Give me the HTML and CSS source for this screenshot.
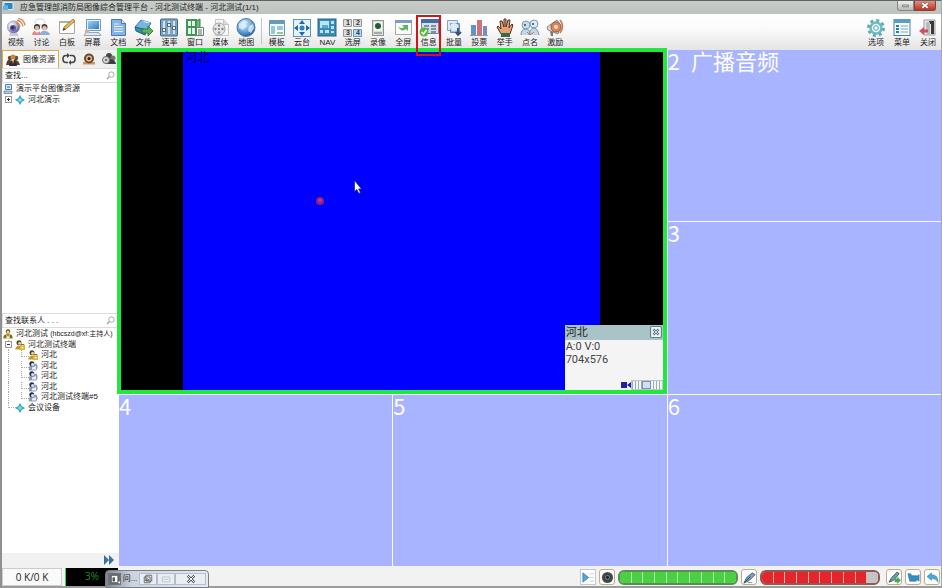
FILE: index.html
```html
<!DOCTYPE html>
<html lang="zh-CN">
<head>
<meta charset="utf-8">
<title>应急管理部消防局图像综合管理平台</title>
<link rel="stylesheet" href="styles.css">
</head>
<body>
<svg class="defs" aria-hidden="true">
  <defs>
    <linearGradient id="blue" x1="0" y1="0" x2="1" y2="1"><stop offset="0" stop-color="#9fd2f4"/><stop offset="1" stop-color="#3479bd"/></linearGradient>
    <radialGradient id="globe" cx=".4" cy=".3" r=".7"><stop offset="0" stop-color="#d8efff"/><stop offset=".6" stop-color="#69a7dc"/><stop offset="1" stop-color="#2c6297"/></radialGradient>
    <radialGradient id="ball" cx=".35" cy=".35" r=".7"><stop offset="0" stop-color="#fff"/><stop offset=".6" stop-color="#aab4d2"/><stop offset="1" stop-color="#4d5686"/></radialGradient>
    <symbol id="star" viewBox="0 0 10 10"><path d="M5 0 6.8 3.2 10 5 6.8 6.8 5 10 3.2 6.8 0 5 3.2 3.2Z" fill="#2ba3bf"/><path d="M5 2.5 6 4 7.5 5 6 6 5 7.5 4 6 2.5 5 4 4Z" fill="#7fdcea"/></symbol>
    <symbol id="host" viewBox="0 0 10 10"><circle cx="5" cy="2.5" r="2.2" fill="#6b4b16"/><circle cx="5" cy="3.1" r="1.5" fill="#f3d093"/><path d="M0 9.5 1 6 4 5h2l3 1 1 3.500Z" fill="#a58824"/><path d="M3.500 5.500 5 8l1.500-2.500V9.500h-3Z" fill="#f8f1c4"/><path d="M1 6.500h2v2H1zM7 6.500h2v2H7z" fill="#4e7431"/></symbol>
    <symbol id="user" viewBox="0 0 10 10"><path d="M1 9.500Q0 5 4 4L8.500 2.500Q11 7 8 9.500Z" fill="#8d9bbb"/><circle cx="3.800" cy="2.800" r="2.500" fill="#29303f"/><circle cx="4.600" cy="3.500" r="1.600" fill="#dbe1ed"/><path d="M4 6.500 8 5v3.500H4Z" fill="#e8eefa"/></symbol>
    <symbol id="userLock" viewBox="0 0 10 10"><circle cx="4" cy="2.800" r="2.500" fill="#54451f"/><circle cx="4.600" cy="3.300" r="1.500" fill="#e8cf98"/><path d="M0 9.500Q1 6 4 5.500l2 1v3Z" fill="#b99b3a"/><path d="M5 5.500h5V10H5Z" fill="#e8ae3b"/><path d="M6 5.500V4.500h3v1" stroke="#987023" fill="none"/><path d="M6.500 7h2v1.500h-2Z" fill="#fff3bf"/></symbol>
    <symbol id="lens" viewBox="0 0 10 10"><circle cx="6" cy="4" r="3" fill="none" stroke="#a3a3a3"/><path d="M4 6 1 9" stroke="#a3a3a3" stroke-width="1.500"/></symbol>
    <symbol id="pc" viewBox="0 0 10 10"><path d="M2.500.5h6v5h-6Z" fill="#dceaf4" stroke="#557c9a"/><path d="M4 2h3v2H4Z" fill="#6fb1d8"/><path d="M1 7h8v2.500H1Z" fill="#b4cbd9" stroke="#557c9a" stroke-width=".7"/></symbol>
  </defs>
</svg>
<div class="app">
  <header class="titlebar">
    <svg class="appicon" viewBox="0 0 12 10"><path d="M2 .5h9v7H2Z" fill="#2d86c8" stroke="#d8eefa"/><path d="M1 4 6 3v5H1Z" fill="#64b5e4"/></svg>
    <h1 class="title">应急管理部消防局图像综合管理平台 - 河北测试终端 - 河北测试(1/1)</h1>
    <button class="win min" aria-label="最小化"><svg viewBox="0 0 18 10"><path d="M5.500 4.500h7v2h-7Z" fill="#fff" stroke="#666"/></svg></button>
    <button class="win quit" aria-label="关闭窗口"><svg viewBox="0 0 22 10"><path d="m8 2.500 6 5m0-5-6 5" stroke="#70302a" stroke-width="3"/><path d="m8 2.500 6 5m0-5-6 5" stroke="#fff" stroke-width="2"/></svg></button>
  </header>

  <nav class="toolbar">
    <div class="tools tools-main">
      <button class="tool"><svg viewBox="0 0 20 20"><circle cx="7.500" cy="9" r="6.200" fill="url(#ball)" stroke="#9b94bd" stroke-width=".6"/><circle cx="7" cy="10" r="3" fill="#6654a5"/><circle cx="6.500" cy="9.500" r="1.300" fill="#271e58"/><path d="m4 15-1 3h10l-2-3Z" fill="#c9c9dc"/><path d="M10 5q3 0 4 4M11 2.500q5 .5 6 6M12 .5q6 .5 7 7" fill="none" stroke="#dc8956" stroke-width="1.300"/></svg>视频</button>
      <button class="tool"><svg viewBox="0 0 20 20"><ellipse cx="9" cy="4" rx="5" ry="3" fill="#fff" stroke="#bbc6d5" stroke-width=".7"/><circle cx="6" cy="9" r="3" fill="#40383b"/><circle cx="6" cy="10" r="2.200" fill="#e9b492"/><circle cx="13.500" cy="9" r="3" fill="#514448"/><circle cx="13.500" cy="10.200" r="2.200" fill="#eabfa4"/><path d="M1 17q1-5 5-4 4 0 4 4Z" fill="#db8a90"/><path d="M9 17q1-5 5-4 4 0 5 4Z" fill="#8bb0d8"/><path d="m4 13 2 2 2-2" fill="#fff"/></svg>讨论</button>
      <button class="tool"><svg viewBox="0 0 20 20"><path d="M2.500 3.500h15v12h-15Z" fill="#fff" stroke="#a8a8a0"/><path d="M2 3h16v2H2Z" fill="#9fbd85"/><path d="m6 12 1-3 9-8 2 2-9 8Z" fill="#e8b75a" stroke="#885d31" stroke-width=".7"/><path d="m5.500 13 1.500-3 1.500 1.500Z" fill="#333"/></svg>白板</button>
      <button class="tool"><svg viewBox="0 0 20 20"><path d="M3.500 1.500h14v11h-14Z" fill="#e4eff8" stroke="#6b9cc4"/><path d="M5 3h11v8H5Z" fill="url(#blue)"/><path d="M3 14.500h13l2 3H1Z" fill="#dde7ed" stroke="#8095a4" stroke-width=".8"/><path d="M2 12h4v3H2Z" fill="#d3ae8e"/></svg>屏幕</button>
      <button class="tool"><svg viewBox="0 0 20 20"><path d="M3.500 1.500h10l4 4v12h-14Z" fill="#86b4e7" stroke="#4979b7"/><path d="M13.500 1.500v4h4" fill="#dceafb" stroke="#4979b7"/><path d="M6 6h5M6 8.500h9M6 11h9M6 13.500h9" stroke="#e5f0ff"/></svg>文档</button>
      <button class="tool"><svg viewBox="0 0 20 20"><path d="m1 9 6-7 10 3-5 9Z" fill="#74b6df" stroke="#397da9"/><path d="m7 2 5 3 5 0" fill="#d4f1ff"/><path d="m1 9 12 3-2 5-9-4Z" fill="#328eae" stroke="#23627f"/><path d="M8 11h6V8l5 5-5 5v-3H8Z" fill="#5cb55c" stroke="#286b32" stroke-width=".8"/></svg>文件</button>
      <button class="tool"><svg viewBox="0 0 20 20"><rect x="1.500" y="1" width="17" height="17" rx="1" fill="#7fa5c2" stroke="#3f6685"/><path d="M5 3v13M10 3v13M15 3v13" stroke="#eef6fa" stroke-width="1.500"/><path d="M3.500 10.500h3v3h-3ZM8.500 5.500h3v3h-3ZM13.500 8.500h3v3h-3Z" fill="#fff" stroke="#284962" stroke-width=".8"/></svg>速率</button>
      <button class="tool"><svg viewBox="0 0 20 20"><path d="M1 1h11v17H1Z" fill="#409658"/><path d="M3 3h3v5H3ZM7 3h3v5H7ZM3 10h3v6H3ZM7 10h3v6H7Z" fill="#e3f5e5"/><path d="m11 3 4-2v11l-4 3Z" fill="#6abb76" stroke="#32804a"/><path d="M11.500 9.500h7v8h-7Z" fill="#fff" stroke="#66806d"/><path d="M13 12h4M13 14h4M13 16h4" stroke="#53715b"/></svg>窗口</button>
      <button class="tool"><svg viewBox="0 0 20 20"><path d="M4.500 1.500h8l5 5v11h-13Z" fill="#f7f7f7" stroke="#c4c4c4"/><path d="M12.500 1.500v5h5" fill="#ddd" stroke="#c4c4c4"/><circle cx="8" cy="11" r="6" fill="#e6e7e8" stroke="#a2a2a2"/><circle cx="8" cy="11" r="1" fill="#777"/><g fill="#8a8a8a"><circle cx="8" cy="7.500" r="1.200"/><circle cx="8" cy="14.500" r="1.200"/><circle cx="4.500" cy="11" r="1.200"/><circle cx="11.500" cy="11" r="1.200"/></g></svg>媒体</button>
      <button class="tool"><svg viewBox="0 0 20 20"><circle cx="10" cy="9.500" r="9" fill="url(#globe)" stroke="#447cac"/><path d="m3 6 5-4 4 2-3 2 2 2-4 4-4-2ZM13 8l4-2 1 4-3 5-3-2Z" fill="#e6f3fb" opacity=".75"/></svg>地图</button>
    </div>
    <div class="divider"></div>
    <div class="tools tools-view">
      <button class="tool"><svg viewBox="0 0 20 20"><path d="M2.500 2.500h15v15h-15Z" fill="#f2fafc" stroke="#6b98a6"/><path d="M3 3h14v3H3Z" fill="#619dbe"/><path d="M4 8h4v8H4ZM10 8h6v4h-6Z" fill="#98c9d2"/><path d="M10 14h6v2h-6Z" fill="#9cc88f"/></svg>模板</button>
      <button class="tool"><svg viewBox="0 0 20 20"><rect x="1.500" y="1.500" width="17" height="17" fill="#e3f2fc" stroke="#6794b5"/><path d="m10 2 3 4H7ZM10 18l3-4H7ZM2 10l4-3v6ZM18 10l-4-3v6Z" fill="#2268a7"/><circle cx="10" cy="10" r="2.500" fill="#2e83c5"/></svg>云台</button>
      <button class="tool"><svg viewBox="0 0 20 20"><rect x="1" y="1" width="18" height="17" fill="#398bb9" stroke="#276485"/><path d="M3 3h9v7H3ZM14 3h3v3h-3ZM14 8h3v3h-3ZM3 12h3v3H3ZM8 12h4v3H8ZM14 13h3v2h-3Z" fill="#b9e4f4"/><path d="M5 7h6v3H5Z" fill="#58a9d0"/></svg><span lang="en">NAV</span></button>
      <button class="tool"><svg viewBox="0 0 20 20"><g fill="#ddd" stroke="#999"><path d="M.5 1.500h8v7h-8ZM10.500 1.500h8v7h-8ZM.5 11.500h8v7h-8Z"/><path d="M10.500 11.500h8v7h-8Z" fill="#b7daf5" stroke="#6594bd"/></g><g class="digits"><text x="3" y="7">1</text><text x="13" y="7">2</text><text x="3" y="17">3</text><text x="13" y="17">4</text></g></svg>选屏</button>
      <button class="tool"><svg viewBox="0 0 20 20"><rect x="4.500" y="2.500" width="11" height="15" fill="#d8dfd9" stroke="#929992"/><path d="M6 4h8v9H6Z" fill="#eff5ef"/><circle cx="10" cy="8" r="3" fill="#255c39"/><path d="M6 15h8" stroke="#777"/></svg>录像</button>
      <button class="tool"><svg viewBox="0 0 20 20"><path d="M2.500 2.500h16v14h-16Z" fill="#fafafa" stroke="#aaa"/><path d="M2 2h17v3H2Z" fill="#7c9ebe"/><path d="M5 8q3 4 6 1l-2-2h6v6l-2-2q-5 4-8-3Z" fill="#62b25a"/></svg>全屏</button>
      <button class="tool marked"><svg viewBox="0 0 20 20"><path d="M2.500 1.500h17v14h-17Z" fill="#d7e0e8" stroke="#77899b"/><path d="M2 1h18v4H2Z" fill="#426caa"/><path d="M5 8h5M12 8h5M5 11h5M12 11h5M12 14h5" stroke="#60788e" stroke-width="1.500"/><circle cx="5" cy="14" r="4.500" fill="#58b943"/><path d="m2.500 14 2 2 3-4" fill="none" stroke="#fff" stroke-width="1.500"/></svg>信息</button>
      <button class="tool"><svg viewBox="0 0 20 20"><path d="M3.500 2.500h10v10h-10Z" fill="#dcecf6" stroke="#86a4bc"/><path d="M6.500 5.500h9v9h-9Z" fill="#9cc0dd" stroke="#678eae"/><circle cx="10" cy="9" r="4" fill="#edf7ff" opacity=".8"/><path d="M14 10v6m-2.500-2 2.500 3 3-3" fill="none" stroke="#374e74" stroke-width="1.800"/></svg>批量</button>
      <button class="tool"><svg viewBox="0 0 20 20"><path d="M2 7h5v10H2Z" fill="#5c94cc"/><path d="M8 2h5v15H8Z" fill="#d0707f"/><path d="M14 8h4v9h-4Z" fill="#6f8ccb"/><path d="M1 17.500h18" stroke="#999"/></svg>投票</button>
      <button class="tool"><svg viewBox="0 0 20 20"><path d="M6 16 2 9l1-1 3 3-1-8h2l2 6V1h2v8l2-7h2l-1 8 3-4 1 1-3 9Z" fill="#e3a376" stroke="#563020" stroke-width="1"/><path d="M6 15h9v4H6Z" fill="#366c4c"/></svg>举手</button>
      <button class="tool"><svg viewBox="0 0 20 20"><circle cx="6" cy="7" r="4" fill="#caddec" stroke="#7c9cb5"/><circle cx="14" cy="6" r="4" fill="#dbe9f5" stroke="#7c9cb5"/><path d="M1 17q0-6 5-6 4 0 4 6M9 17q1-7 5-7 4 1 5 7" fill="#c5d7e7" stroke="#7992a5"/><circle cx="5" cy="7" r="1" fill="#345"/><circle cx="13" cy="6" r="1" fill="#345"/><path d="m7 14 3 3 4-3" stroke="#b77" fill="none"/></svg>点名</button>
      <button class="tool"><svg viewBox="0 0 20 20"><path d="m2 9 10-7q5 5 1 14L3 12Z" fill="#dadada" stroke="#888"/><circle cx="11" cy="9" r="5" fill="#d68a5b" stroke="#99593a"/><circle cx="11" cy="9" r="2" fill="#f3dacb"/><path d="M15 2q5 6 0 13" fill="none" stroke="#bd7650" stroke-width="1.500"/><path d="m5 13 3 1v4H6Z" fill="#777"/></svg>激励</button>
    </div>
    <div class="tools tools-app">
      <button class="tool"><svg viewBox="0 0 20 20"><circle cx="10" cy="10" r="7.500" fill="none" stroke="#5faab4" stroke-width="3" stroke-dasharray="2.950 2.940"/><circle cx="10" cy="10" r="5.500" fill="#e5f5f7" stroke="#6cb9c1" stroke-width="2.500"/><circle cx="10" cy="10" r="2.300" fill="#fff" stroke="#57a3ac"/></svg>选项</button>
      <button class="tool"><svg viewBox="0 0 20 20"><rect x="2" y="1.500" width="16" height="16" fill="#f5fbff" stroke="#4680a9"/><path d="M2 1h16v4H2Z" fill="#5c9dca"/><path d="M4 8h3M4 11h3M4 14h3" stroke="#297bb4" stroke-width="2"/><path d="M8.500 8H16M8.500 11H16M8.500 14H16" stroke="#7fa4be"/></svg>菜单</button>
      <button class="tool"><svg viewBox="0 0 20 20"><path d="M6 2h11v15H6Z" fill="#e9e9e9" stroke="#999"/><path d="M11 3h5v13h-3V6h-2Z" fill="#39363e"/><path d="M8 4h4v13l-4-2Z" fill="#b8b8bd"/><path d="m1 13 5-4v2.500h4v3H6V17Z" fill="#cc5262"/></svg>关闭</button>
    </div>
  </nav>

  <main class="workspace">
    <aside class="sidebar">
      <div class="tabs">
        <button class="tab current"><svg viewBox="0 0 14 12"><circle cx="4" cy="4" r="2.200" fill="#694728"/><circle cx="10" cy="4" r="2.200" fill="#694728"/><path d="M0 11q1-6 4-5t3 5ZM7 11q0-6 3-5t4 5Z" fill="#574039"/><circle cx="7" cy="3" r="2.500" fill="#c08951"/><path d="M3 12q1-6 4-6t4 6Z" fill="#322d35"/><path d="m6 6 1 4 1-4Z" fill="#e7c15c"/></svg>图像资源</button>
        <button class="tab" aria-label="轮巡"><svg viewBox="0 0 14 12"><path d="M6 2.500H4Q1 2.500 1 6t3 3.500h2M8 2.500h2q3 0 3 3.500t-3 3.500H9" fill="none" stroke="#444" stroke-width="1.600"/><path d="M5 0v5l3-2.500ZM9 7v5L6.500 9.500Z" fill="#444"/></svg></button>
        <button class="tab" aria-label="扬声器"><svg viewBox="0 0 14 12"><path d="M1 9h12v2.500H1Z" fill="#c99a62"/><circle cx="7" cy="5.500" r="5" fill="#6c4b31"/><circle cx="7" cy="5.500" r="3" fill="#e2bc8f"/><circle cx="7" cy="5.500" r="1.500" fill="#28221e"/></svg></button>
        <button class="tab" aria-label="成员"><svg viewBox="0 0 14 12"><circle cx="7" cy="3" r="3" fill="#494545"/><circle cx="11" cy="5" r="2.500" fill="#777"/><path d="M4 11q0-6 4-5 5 0 6 5Z" fill="#3e3d3f"/><circle cx="4" cy="7" r="3.500" fill="#ddd" stroke="#666"/><circle cx="4" cy="7" r="1.300" fill="#777"/></svg></button>
      </div>
      <label class="search"><input type="text" placeholder="查找..." aria-label="查找"><svg viewBox="0 0 10 10"><use href="#lens"/></svg></label>
      <ul class="tree resources">
        <li class="row"><svg viewBox="0 0 10 10"><use href="#pc"/></svg>演示平台图像资源</li>
        <li class="row"><button class="toggle plus" aria-label="展开"></button><svg viewBox="0 0 10 10"><use href="#star"/></svg>河北演示</li>
      </ul>
      <label class="search contacts-search"><input type="text" placeholder="查找联系人 . . ." aria-label="查找联系人"><svg viewBox="0 0 10 10"><use href="#lens"/></svg></label>
      <ul class="tree contacts">
        <li class="row"><svg viewBox="0 0 10 10"><use href="#host"/></svg><span>河北测试 <span class="account">(hbcszd@xf:主持人)</span></span></li>
        <li class="row trunk"><button class="toggle" aria-label="收起"></button><svg viewBox="0 0 10 10"><use href="#userLock"/></svg>河北测试终端</li>
        <li class="row trunk leaf"><svg viewBox="0 0 10 10"><use href="#userLock"/></svg>河北</li>
        <li class="row trunk leaf"><svg viewBox="0 0 10 10"><use href="#user"/></svg>河北</li>
        <li class="row trunk leaf"><svg viewBox="0 0 10 10"><use href="#user"/></svg>河北</li>
        <li class="row trunk leaf"><svg viewBox="0 0 10 10"><use href="#user"/></svg>河北</li>
        <li class="row trunk leaf last"><svg viewBox="0 0 10 10"><use href="#user"/></svg>河北测试终端#5</li>
        <li class="row tail"><svg viewBox="0 0 10 10"><use href="#star"/></svg>会议设备</li>
      </ul>
      <div class="expand"><button aria-label="展开面板"><svg viewBox="0 0 10 10"><path d="m0 0 5 5-5 5ZM5 0l5 5-5 5Z" fill="#3a7198"/></svg></button></div>
    </aside>

    <section class="wall">
      <div class="cell live">
        <div class="video"><span class="caption">河北</span></div>
        <svg class="dot" viewBox="0 0 8 8"><circle cx="4" cy="4" r="4" fill="#8c1c8c"/><circle cx="4" cy="3.500" r="2" fill="#b93a7c"/></svg>
        <svg class="pointer" viewBox="0 0 8 14"><path d="M.5.5v11l2.300-2 2 4 1.700-1-2-3.500h3Z" fill="#fff" stroke="#001070" stroke-width=".6"/></svg>
        <div class="info">
          <div class="info-head"><span>河北</span><button aria-label="关闭信息"><svg viewBox="0 0 11 11"><rect x=".5" y=".5" width="10" height="10" rx="1" fill="#edf3f4" stroke="#5c8289"/><path d="m3 3 5 5m0-5-5 5" stroke="#446a73" stroke-width="2"/><path d="m3 3 5 5m0-5-5 5" stroke="#fff" stroke-width=".7"/></svg></button></div>
          <p>A:0 V:0</p>
          <p>704x576</p>
          <div class="info-foot"><svg viewBox="0 0 10 8"><path d="M0 1h6v6H0ZM6 4l4-3v6Z" fill="#2220a8"/></svg><div class="volume"><i></i></div></div>
        </div>
      </div>
      <div class="cell"><b>2</b><b>广播音频</b></div>
      <div class="cell"><b>3</b></div>
      <div class="cell"><b>4</b></div>
      <div class="cell"><b>5</b></div>
      <div class="cell"><b>6</b></div>
    </section>
  </main>

  <footer class="status">
    <div class="traffic">0 K/0 K</div>
    <div class="cpu">3%</div>
    <div class="controls">
      <button class="square flat" aria-label="播放"><svg viewBox="0 0 14 14"><path d="m1 2 6 5-6 5Z" fill="#57a4d4" stroke="#3b85ba"/><path d="M8 3h5M8 7h5M8 11h5" stroke="#bfd0df"/></svg></button>
      <button class="square" aria-label="音量"><svg viewBox="0 0 14 14"><circle cx="7" cy="7" r="6" fill="#47504b"/><circle cx="7" cy="7" r="3.500" fill="#6c7771" stroke="#252d29"/><circle cx="7" cy="7" r="1.500" fill="#202020"/></svg></button>
      <div class="meter green"><i></i><i></i><i></i><i></i><i></i><i></i><i></i><i></i><i></i><i></i></div>
      <button class="square" aria-label="麦克风"><svg viewBox="0 0 14 14"><path d="m1 13 3-6 6-5 3 2-6 6Z" fill="#7fa3c0" stroke="#3c617c"/><path d="m1 13 7-7" stroke="#345"/><path d="M5 12.500h5" stroke="#789"/></svg></button>
      <div class="meter red"><i></i><i></i><i></i><i></i><i></i><i></i><i></i><i></i><i></i><i class="off"></i></div>
      <button class="square first-action" aria-label="发言"><svg viewBox="0 0 14 14"><path d="m1 12 3-5 6-6 2 2-6 7Z" fill="#7899a9" stroke="#3a5867"/><path d="M7 8h3V6l4 4-4 4v-2H7Z" fill="#47ac59"/></svg></button>
      <button class="square" aria-label="摄像"><svg viewBox="0 0 14 14"><path d="M1 3h3l1 2h5v1l3-2v7l-3-2v2H3Z" fill="#328fc5" stroke="#236997" stroke-width=".6"/></svg></button>
      <button class="square" aria-label="返回"><svg viewBox="0 0 14 14"><path d="m1 6 5-4v2q7 0 7 8-2-4-7-4v2Z" fill="#45a9d6" stroke="#3187b4" stroke-width=".6"/></svg></button>
    </div>
    <div class="dock">
      <button class="dark" aria-label="窗口"><svg viewBox="0 0 12 12"><path d="M1.500 1.500h8v9h-8Z" fill="#fff" stroke="#444"/><path d="M3 4h3v5H3Z" fill="#555"/><path d="M10 10h2" stroke="#fff" stroke-width="2"/></svg></button>
      <button class="label">问...</button>
      <button aria-label="还原"><svg viewBox="0 0 12 12"><path d="M3.500 1.500h7v7h-7ZM1.500 3.500h7v7h-7Z" fill="#f2f6fa" stroke="#555"/><path d="M3.500 6h3v2h-3Z" fill="none" stroke="#555"/></svg></button>
      <button aria-label="最大化" disabled><svg viewBox="0 0 12 12"><path d="M1.500 3.500h9v6h-9Z" fill="none" stroke="#b9c1cb"/><path d="M3 6.500h6" stroke="#b9c1cb"/></svg></button>
      <button class="wide" aria-label="关闭面板"><svg viewBox="0 0 12 12"><path d="m2 2 8 8m0-8-8 8" stroke="#555" stroke-width="3"/><path d="m2 2 8 8m0-8-8 8" stroke="#fff" stroke-width="1.200"/></svg></button>
    </div>
  </footer>
</div>
</body>
</html>
```

FILE: styles.css
```css
* { box-sizing: border-box; }

body {
  margin: 0;
  font: 8px/10px "Liberation Sans", "Noto Sans CJK SC", sans-serif;
  color: #222;
}

button {
  margin: 0;
  padding: 0;
  border: 0;
  background: none;
  font: inherit;
  color: inherit;
}

svg { display: block; flex: none; }
.defs { position: absolute; width: 0; height: 0; }

.app {
  display: flex;
  flex-direction: column;
  min-height: 100vh;
  border-left: 2px solid #8f9190;
  border-right: 1px solid #a5a7a5;
  background: #f3f3f3;
}

/* Title bar */
.titlebar {
  display: flex;
  height: 14px;
  padding-right: 5px;
  border-top: 1px solid #5f625f;
  background: linear-gradient(#c9cdc9, #bcc2bd);
}
.appicon { width: 12px; height: 10px; margin: 1px 6px 0 0; }
.title {
  flex: 1;
  margin: 0;
  font-size: 8px;
  font-weight: normal;
  line-height: 14px;
  white-space: nowrap;
}
.win { height: 10px; border: 1px solid #858783; border-top: 0; background: linear-gradient(#eee, #b9bbb7); }
.win svg { width: 100%; height: 9px; }
.min { width: 17px; border-radius: 0 0 0 3px; }
.quit { width: 22px; border-color: #8b3f35; border-radius: 0 0 3px 0; background: linear-gradient(#dc9184, #bb3524); }

/* Toolbar */
.toolbar {
  display: flex;
  height: 36px;
  padding-left: 1px;
  background: linear-gradient(#fff, #fbfbfb 40%, #e4e4e4);
}
.tools { display: grid; grid-auto-flow: column; grid-auto-columns: 1fr; }
.tools-main { width: 256px; }
.tools-view { width: 304px; }
.tools-app { width: 78px; margin-left: auto; }
.divider { width: 1px; margin: 4px 2px 6px; background: #c6c6c6; }
.tool {
  position: relative;
  display: flex;
  flex-direction: column;
  align-items: center;
  padding-top: 4px;
  line-height: 9px;
  white-space: nowrap;
}
.tool svg { width: 20px; height: 20px; }
.marked::after {
  content: "";
  position: absolute;
  z-index: 3;
  inset: 1px 0 -6px;
  border: 2px solid #d3141c;
}
.digits { font: bold 7px "Liberation Sans", sans-serif; fill: #333; }

/* Sidebar */
.workspace { display: flex; flex: 1; }
.sidebar { display: flex; flex-direction: column; width: 117px; background: #fff; }
.tabs { display: flex; height: 18px; background: #efefef; }
.tab { display: flex; flex: 1; align-items: center; justify-content: center; }
.tab svg { width: 14px; height: 12px; }
.current {
  flex: none;
  width: 57px;
  gap: 3px;
  border: 1px solid #e0ab45;
  border-bottom: 0;
  background: #fafafa;
}
.search {
  display: flex;
  align-items: center;
  height: 15px;
  padding: 0 3px 0 2px;
  border: 1px solid #ddd;
  background: #fff;
}
.search input {
  flex: 1;
  min-width: 0;
  padding: 0;
  border: 0;
  outline: 0;
  background: none;
  font: inherit;
  color: #222;
}
.search input::placeholder { color: #222; opacity: 1; }
.search svg { width: 9px; height: 9px; }

.tree { display: grid; grid-auto-rows: 1fr; margin: 1px 0 0; padding: 0 0 0 1px; list-style: none; }
.resources { height: 21px; }
.contacts { height: 84px; }
.contacts-search { margin-top: auto; }
.row { position: relative; display: flex; align-items: center; gap: 3px; white-space: nowrap; }
.row svg { width: 10px; height: 10px; }
.account { font-size: 7px; }
.leaf { padding-left: 25px; }
.tail { padding-left: 12px; }
.toggle { position: relative; width: 7px; height: 7px; margin: 0 0 0 2px; border: 1px solid #999; background: #fff; z-index: 1; }
.toggle::before, .plus::after { content: ""; position: absolute; left: 1px; top: 2px; width: 3px; height: 1px; background: #333; }
.plus::after { transform: rotate(90deg); }
.trunk::before, .tail::before { content: ""; position: absolute; left: 5px; top: 0; bottom: 0; border-left: 1px dotted #aaa; }
.tail::before { bottom: 5px; width: 7px; border-bottom: 1px dotted #aaa; }
.leaf::after { content: ""; position: absolute; left: 18px; top: 0; height: 6px; width: 7px; border-left: 1px dotted #aaa; border-bottom: 1px dotted #aaa; }
.expand {
  display: flex;
  justify-content: flex-end;
  align-items: center;
  height: 13px;
  margin-top: 140px;
  padding-right: 5px;
  background: #f1f1f1;
}
.expand svg { width: 10px; height: 10px; }

/* Video wall */
.wall {
  flex: 1;
  display: grid;
  grid-template: repeat(3, 1fr) / repeat(3, 1fr);
  gap: 1px;
  background: #fbfbff;
}
.cell {
  display: flex;
  gap: 11px;
  background: #a8b4ff;
  color: #fff;
}
.cell b { font: 22px/20px "Noto Sans CJK SC", sans-serif; }
.live {
  position: relative;
  z-index: 2;
  grid-area: 1 / 1 / 3 / 3;
  justify-content: center;
  margin: -2px 0 0 -2px;
  border: 4px solid #20e83c;
  background: #000;
}
.video { width: 77%; background: #0000fe; }
.caption { display: block; padding: 0 2px; font-size: 12px; line-height: 12px; color: #000060; }
.dot { position: absolute; left: 36%; top: 43%; width: 8px; height: 8px; }
.pointer { position: absolute; left: 43%; top: 38%; width: 8px; height: 14px; }
.info {
  position: absolute;
  right: 0;
  bottom: 0;
  display: flex;
  flex-direction: column;
  width: 98px;
  height: 65px;
  background: #f4f4f4;
  color: #444;
  font: 11px/13px Roboto, "Noto Sans CJK SC", sans-serif;
}
.info-head {
  display: flex;
  justify-content: space-between;
  align-items: center;
  height: 15px;
  padding: 0 1px;
  background: #a9c3c7;
  color: #222;
}
.info-head svg { width: 12px; height: 12px; }
.info p { margin: 0; padding: 0 1px; }
.info-foot { display: flex; justify-content: flex-end; align-items: center; margin-top: auto; }
.info-foot svg { width: 10px; height: 8px; }
.volume {
  display: flex;
  justify-content: center;
  width: 32px;
  height: 10px;
  border: 1px solid #bbc5cc;
  background: repeating-linear-gradient(90deg, #9fabb2 0 1px, #f2f5f7 1px 3px);
}
.volume i { width: 9px; border: 1px solid #7891ad; background: #cfe0f2; }

/* Status bar */
.status {
  position: relative;
  display: flex;
  height: 22px;
  padding-top: 2px;
  border-bottom: 2px solid #9b9b9b;
  background: #f2f2f2;
}
.traffic, .cpu { font: 10px/17px "Open Sans", sans-serif; text-align: center; }
.traffic { width: 60px; margin-right: 3px; border: 1px solid #ccc; background: #fafafa; }
.cpu { width: 53px; border-left: 1px solid #2fe043; background: #000; color: #238e2b; }
.controls { display: flex; align-items: center; gap: 3px; margin-left: auto; padding-right: 1px; }
.square {
  display: grid;
  place-items: center;
  width: 16px;
  height: 16px;
  border: 1px solid #c0ad87;
  border-radius: 3px;
  background: #fff;
}
.square svg { width: 13px; height: 13px; }
.flat { border-color: #c2c7cf; border-radius: 0; }
.first-action { margin-left: 3px; }
.meter {
  display: grid;
  grid-template-columns: repeat(10, 1fr);
  gap: 1px;
  width: 120px;
  height: 15px;
  overflow: hidden;
  border: 2px solid #777;
  border-radius: 6px;
}
.green { background: #b4eaac; border-color: #5c8a5a; }
.green i { background: #4bcf43; }
.red { background: #f0b3af; border-color: #8b5b57; }
.red i { background: #e52529; }
.red .off { background: #c5c5c5; }

.dock {
  position: absolute;
  left: 103px;
  bottom: -2px;
  display: flex;
  align-items: center;
  width: 104px;
  height: 18px;
  padding: 0 2px;
  border: 1px solid #777e8a;
  border-radius: 4px 4px 0 0;
  background: linear-gradient(90deg, #7e858e, #cbd3df 25%, #e5e9ef);
}
.dock button { display: grid; place-items: center; width: 18px; height: 12px; border: 1px solid #b5bdc9; background: #e9eef5; }
.dock svg { width: 10px; height: 10px; }
.dock .dark { width: 13px; border: 0; background: #6c7279; }
.dock .label { border: 0; background: none; }
.dock .wide { flex: 1; }
```
